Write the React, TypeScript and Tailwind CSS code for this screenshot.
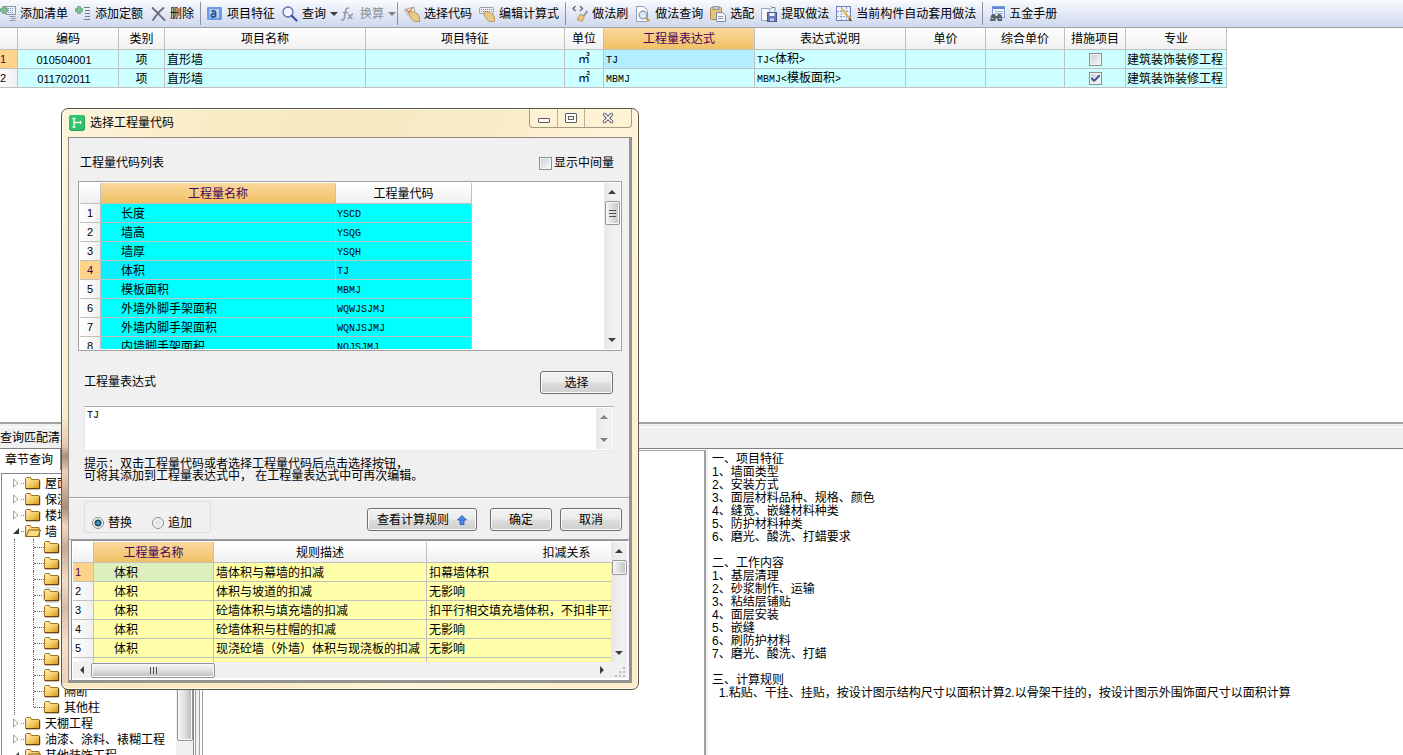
import { Check, X } from "lucide-react";
import clsx from "clsx";
import type { ReactNode } from "react";

/* ---------- Icons ---------- */

type IconName =
  | "addList"
  | "addQuota"
  | "remove"
  | "feature"
  | "search"
  | "fx"
  | "pick"
  | "edit"
  | "brush"
  | "lookup"
  | "paste"
  | "extract"
  | "auto"
  | "manual";

const plus = (
  <path d="M2.500.5h3v2h2v3h-2v2h-3v-2h-2v-3h2z" fill="#7dbd8f" stroke="#5a9d72" strokeWidth=".7" />
);
const hand = (
  <path
    d="M5 6.500 7 5l2 1.500L10.500 6l1.500 1.500 1.500 0L15.500 11v4.500h-5L8 13.500 5.500 10z"
    fill="#e9c98a"
    stroke="#b08b4c"
    strokeWidth=".8"
  />
);

const icons: Record<IconName, ReactNode> = {
  addList: (
    <>
      <rect x="6.500" y=".5" width="9" height="8" fill="#f1f4fb" stroke="#8b96b2" />
      <path d="M8 2.500h1m1 0h1m1 0h1M8 4.500h1m1 0h1m1 0h1M8 6.500h1m1 0h1m1 0h1" stroke="#7d89a8" />
      <path d="M9.500 10.500h6M11 12.500h4.500M9.500 14.500h6" stroke="#8d95a6" fill="none" />
      {plus}
    </>
  ),
  addQuota: (
    <>
      <path d="M9 1.500h6M10 4.500h5M10 7.500h5M10 10.500h5M9 13.500h6" stroke="#71798c" />
      {plus}
    </>
  ),
  remove: (
    <path
      d="M2.500 2C6 5 10 9.500 14.500 14M13.500 2C9 5.500 6 9.500 3 14"
      fill="none"
      stroke="#666c7a"
      strokeWidth="1.800"
      strokeLinecap="round"
    />
  ),
  feature: (
    <>
      <rect x="0" y="1" width="15" height="13" rx="1" fill="#6d9be6" />
      <rect x="2.500" y="3" width="9.500" height="9" fill="#b9d1f5" />
      <path
        d="M4.500 5.500c2-1.300 4-.8 4 1V11M8.500 7.500c-5-.3-5.500 3.500-2.500 3.500 1.500 0 2.500-1 2.500-2"
        fill="none"
        stroke="#32548f"
        strokeWidth="1.800"
      />
    </>
  ),
  search: (
    <>
      <circle cx="6" cy="6" r="5" fill="#f4f7ff" stroke="#5f6fb5" strokeWidth="1.300" />
      <path d="m9.800 9.800 4.700 4.700" stroke="#3d4fae" strokeWidth="2.200" strokeLinecap="round" />
    </>
  ),
  fx: (
    <path
      d="M9 2.500C7 1 5.800 3 5.400 5.500L4.300 12c-.4 2-1.800 2.700-3.300 1.500M3 6.500h5M8 8.500c2-.8 1.800 4.500 4.500 4M13 8c-2 .5-3 4.500-5.500 4.500"
      fill="none"
      stroke="#8f96a6"
      strokeWidth="1.500"
    />
  ),
  pick: (
    <>
      <path d="M.5 3.500 10 1l1 5-7.500 3z" fill="#eee8dd" stroke="#a39b8c" strokeWidth=".8" />
      <path d="m2.500 3.500 2.500 3 3.500-5" fill="none" stroke="#d5704e" strokeWidth="1.200" />
      {hand}
    </>
  ),
  edit: (
    <>
      <rect x=".5" y="1.500" width="14" height="6" rx="1" fill="#eceef2" stroke="#9aa0ac" />
      <path d="M2 3.500h11M2 5.500h11" stroke="#8b92a1" strokeDasharray="1 1" />
      {hand}
    </>
  ),
  brush: (
    <>
      <path d="M3.500 0 1 2.500 3.500 5M8 0l2.500 2.500L8 5" fill="none" stroke="#53596a" strokeWidth="1.200" />
      <path d="m15.500 5-4 5" stroke="#9099ab" strokeWidth="2" />
      <path d="m8.500 8 4 3-2.500 4.500-5-2z" fill="#e4c67c" stroke="#af8f49" strokeWidth=".8" />
    </>
  ),
  lookup: (
    <>
      <path d="M1.500.5h7l4 4v11h-11z" fill="#fbfcff" stroke="#96a0b8" />
      <circle cx="8" cy="9" r="3.800" fill="#dbe8f8" stroke="#8592ac" strokeWidth="1.200" />
      <path d="m10.800 12 3.500 3" stroke="#c7974a" strokeWidth="2.200" />
    </>
  ),
  paste: (
    <>
      <rect x=".5" y="1.500" width="11" height="12" rx="1" fill="#e6c47c" stroke="#ad894a" />
      <rect x="3" y=".5" width="6" height="3" fill="#c9cdd6" stroke="#868d9c" strokeWidth=".8" />
      <path d="M6.500 6.500h6l3 3v6h-9z" fill="#f5f7fc" stroke="#7f8ba8" />
      <path d="M8 10.500h5M8 12.500h5" stroke="#8f9ab5" />
    </>
  ),
  extract: (
    <>
      <path d="M.5 2.500h8v12h-8z" fill="#f6f8fd" stroke="#9ba6c0" />
      <path d="M11 1.500h3v4M9.500 3l1.500-1.500L9.500 0" fill="none" stroke="#7c88a5" />
      <rect x="6.500" y="6.500" width="9" height="9" fill="#6976b8" stroke="#4a568f" />
      <path d="M8.500 7h5v3h-5z" fill="#eef1fb" />
      <path d="M9 12.500h4V15H9z" fill="#c4cbe6" />
    </>
  ),
  auto: (
    <>
      <rect x=".5" y=".5" width="14" height="14" fill="#eef2fb" stroke="#6e83bd" />
      <path d="M1 5.500h13M1 10.500h13M5.500 1v13M10.500 1v13" stroke="#8fa0cf" strokeDasharray="2 1" />
      <path d="m6 3 8 10" stroke="#e2b85b" strokeWidth="2.400" />
      <path d="m13 12.500 2.500 2.500" stroke="#5c4a2a" strokeWidth="1.500" />
    </>
  ),
  manual: (
    <>
      <rect x="3.500" y=".5" width="12" height="11" fill="#f1f6fe" stroke="#7a9cd3" />
      <path d="M4 2h11" stroke="#5c8ad6" strokeWidth="2" />
      <path d="M6 5.500h8M6 7.500h8" stroke="#a3b4d1" />
      <path d="M2 9.500 4 8h2l1 2h1l1-2h2l2 1.500V15H8.500v-2.500h-2V15H1z" fill="#59626f" />
      <path d="M2.500 12.500h2M10 12.500h2" stroke="#b9c1cc" />
    </>
  ),
};

function Triangle({ dir, dim }: { dir: "up" | "down" | "left" | "right"; dim?: boolean }) {
  const d = {
    up: "M4 2 8 6H0z",
    down: "M0 2h8L4 6z",
    left: "M6 0v8L2 4z",
    right: "M2 0v8l4-4z",
  }[dir];
  return (
    <svg viewBox="0 0 8 8" className="size-2 shrink-0">
      <path d={d} fill={dim ? "#808080" : "#3c3c3c"} />
    </svg>
  );
}

function Folder({ open }: { open?: boolean }) {
  return (
    <svg viewBox="0 0 16 14" className="h-[14px] w-4 shrink-0">
      <defs>
        <linearGradient id="folder" x1="0" y1="0" x2="1" y2="1">
          <stop offset="0" stopColor="#fff0b8" />
          <stop offset=".5" stopColor="#f5cf6a" />
          <stop offset="1" stopColor="#d48f14" />
        </linearGradient>
      </defs>
      <path d="M.5 12.500V2.500l1-1h4l1 2h7.500l.5 1v8z" fill="url(#folder)" stroke="#a3741c" />
      {open && <path d="M.8 12.500 4 6h11.500l-2.500 6.500z" fill="#f9dc83" stroke="#8a6118" />}
      {!open && <path d="M1 12.800h13.700V4.500" fill="none" stroke="#4d3508" />}
    </svg>
  );
}

/* ---------- Toolbar ---------- */

interface Tool {
  icon: IconName;
  label: string;
  menu?: boolean;
  disabled?: boolean;
}

const toolGroups: Tool[][] = [
  [
    { icon: "addList", label: "添加清单" },
    { icon: "addQuota", label: "添加定额" },
    { icon: "remove", label: "删除" },
  ],
  [
    { icon: "feature", label: "项目特征" },
    { icon: "search", label: "查询", menu: true },
    { icon: "fx", label: "换算", menu: true, disabled: true },
  ],
  [
    { icon: "pick", label: "选择代码" },
    { icon: "edit", label: "编辑计算式" },
  ],
  [
    { icon: "brush", label: "做法刷" },
    { icon: "lookup", label: "做法查询" },
    { icon: "paste", label: "选配" },
    { icon: "extract", label: "提取做法" },
    { icon: "auto", label: "当前构件自动套用做法" },
  ],
  [{ icon: "manual", label: "五金手册" }],
];

function Toolbar() {
  return (
    <div className="flex h-7 shrink-0 items-center gap-[6px] overflow-hidden border-b border-[#a0a0a0] bg-gradient-to-b from-[#fafbfe] via-[#e3e8f5] to-[#cfd8ee]">
      {toolGroups.map((group, i) => (
        <div key={i} className="flex shrink-0 items-center gap-[6px]">
          {i > 0 && <span className="h-[23px] w-px bg-[#8e929c]" />}
          <div className="flex items-center gap-[7px]">
            {group.map((tool) => (
              <button
                key={tool.label}
                disabled={tool.disabled}
                className={clsx(
                  "flex shrink-0 items-center gap-1 whitespace-nowrap",
                  tool.disabled && "text-[#8c8f98]",
                  tool.menu && "-mr-[5px]"
                )}
              >
                <svg viewBox="0 0 16 16" className="size-4 shrink-0">
                  {icons[tool.icon]}
                </svg>
                {tool.label}
                {tool.menu && <Triangle dir="down" dim={tool.disabled} />}
              </button>
            ))}
          </div>
        </div>
      ))}
    </div>
  );
}

/* ---------- Shared controls ---------- */

function CheckBox({ id, label, checked }: { id: string; label?: string; checked?: boolean }) {
  return (
    <span className="relative inline-block size-[13px] shrink-0 align-top">
      <input
        id={id}
        type="checkbox"
        aria-label={label}
        defaultChecked={checked}
        className="peer block size-[13px] appearance-none border border-[#8e8f8f] bg-gradient-to-br from-[#c9ced6] to-[#fbfbfb] shadow-[inset_0_0_0_1px_#f4f4f4]"
      />
      <Check
        size={11}
        strokeWidth={4}
        className="pointer-events-none absolute top-px left-px hidden text-[#3c4f9c] peer-checked:block"
      />
    </span>
  );
}

function PushButton({ children, className }: { children: ReactNode; className: string }) {
  return (
    <button
      className={clsx(
        "flex h-[23px] items-center justify-center gap-2 rounded-[3px] border border-[#707070] bg-[linear-gradient(#f2f2f2,#ebebeb_48%,#dddddd_52%,#cfcfcf)] shadow-[inset_0_0_0_1px_#fafafa]",
        className
      )}
    >
      {children}
    </button>
  );
}

function Radio({ label, checked }: { label: string; checked?: boolean }) {
  return (
    <label className="flex items-center gap-1">
      <input
        type="radio"
        name="mode"
        defaultChecked={checked}
        className="size-3 appearance-none rounded-full border border-[#8e8f8f] bg-[radial-gradient(circle,#dcdfe3,#fbfbfb)] shadow-[inset_0_0_0_1px_#f4f4f4] checked:bg-[radial-gradient(circle,#5cc0ec_0,#12405f_3px,#f4f4f4_4px)]"
      />
      {label}
    </label>
  );
}

function VScroll({ thumb, dim }: { thumb?: ReactNode; dim?: boolean }) {
  return (
    <div
      aria-hidden="true"
      className="flex w-4 shrink-0 flex-col items-center bg-gradient-to-r from-[#e6e6e6] via-[#f0f0f0] to-[#f0f0f0]"
    >
      <span className="flex h-[18px] items-center">
        <Triangle dir="up" dim={dim} />
      </span>
      {thumb}
      <span className="mt-auto flex h-[18px] items-center">
        <Triangle dir="down" dim={dim} />
      </span>
    </div>
  );
}

const thumbBase =
  "flex items-center justify-center rounded-[2px] border border-[#959595] shadow-[inset_0_0_0_1px_#fafafa]";

const box = "overflow-hidden border-r border-b border-[#c0c0c0] whitespace-nowrap";
const cell = clsx(box, "pt-[2px] leading-4");
const codeCell = clsx(box, "leading-[18px]");
const headCell = clsx(box, "bg-gradient-to-b from-white to-[#f0f0f0] pt-[2px] text-center font-normal");
const activeHead = clsx(
  box,
  "bg-gradient-to-b from-[#fad99d] to-[#f0c063] pt-[2px] text-center font-normal text-[#4b0059]"
);
const rowHead = clsx(codeCell, "bg-gradient-to-r from-white to-[#f0f0f0] text-[11px] font-normal");
const activeRowHead = clsx(codeCell, "bg-[#ffd38a] text-[11px] font-normal text-[#4b0059]");
const mono = "font-['Liberation_Mono','Noto_Sans_CJK_SC',monospace] text-[10px] leading-none";

/* ---------- Bill table ---------- */

const billColumns = [
  { title: "", width: "w-[18px]" },
  { title: "编码", width: "w-[101px]" },
  { title: "类别", width: "w-[46px]" },
  { title: "项目名称", width: "w-[201px]" },
  { title: "项目特征", width: "w-[199px]" },
  { title: "单位", width: "w-[39px]" },
  { title: "工程量表达式", width: "w-[151px]" },
  { title: "表达式说明", width: "w-[151px]" },
  { title: "单价", width: "w-[80px]" },
  { title: "综合单价", width: "w-[79px]" },
  { title: "措施项目", width: "w-[61px]" },
  { title: "专业", width: "w-[101px]" },
];

const billRows = [
  { code: "010504001", unit: "㎥", expr: "TJ", note: "体积", measure: false },
  { code: "011702011", unit: "㎡", expr: "MBMJ", note: "模板面积", measure: true },
];

function BillTable() {
  return (
    <div className="min-h-0 flex-1 overflow-hidden">
      <table className="w-[1227px] table-fixed border-separate border-spacing-0">
        <thead>
          <tr className="leading-[19px]">
            {billColumns.map((col, i) => (
              <th
                key={i}
                aria-label={col.title || "序号"}
                className={clsx(i === 6 ? activeHead : headCell, col.width)}
              >
                {col.title}
              </th>
            ))}
          </tr>
        </thead>
        <tbody className="bg-[#ccffff]">
          {billRows.map((row, i) => (
            <tr key={row.code}>
              <th className={clsx(i === 0 ? activeRowHead : rowHead, "text-left")}>{i + 1}</th>
              <td className={clsx(cell, "pr-2 text-center text-[11px]")}>{row.code}</td>
              <td className={clsx(cell, "text-center")}>项</td>
              <td className={clsx(cell, "pl-[2px]")}>直形墙</td>
              <td className={cell} />
              <td className={clsx(codeCell, "text-center")}>{row.unit}</td>
              <td className={clsx(codeCell, "pl-[2px]", i === 0 && "bg-[#b3eeff]")}>
                <span className={mono}>{row.expr}</span>
              </td>
              <td className={clsx(codeCell, "pl-[2px]")}>
                <span className={mono}>{row.expr}&lt;</span>
                {row.note}
                <span className={mono}>&gt;</span>
              </td>
              <td className={cell} />
              <td className={cell} />
              <td className={clsx(box, "text-center leading-none")}>
                <CheckBox id={`measure-${i}`} label="措施项目" checked={row.measure} />
              </td>
              <td className={clsx(cell, "pl-px")}>建筑装饰装修工程</td>
            </tr>
          ))}
        </tbody>
      </table>
    </div>
  );
}

/* ---------- Bottom panel ---------- */

const treeTop = [{ label: "屋面" }, { label: "保温" }, { label: "楼地" }, { label: "墙", open: true }];
const treeChildren = ["", "", "", "", "", "", "", "", "", "隔断", "其他柱"];
const treeRest = [{ label: "天棚工程" }, { label: "油漆、涂料、裱糊工程" }, { label: "其他装饰工程", open: true }];

function TreeNode({ label, open }: { label: string; open?: boolean }) {
  return (
    <li className="flex h-4 items-center whitespace-nowrap">
      <svg viewBox="0 0 8 10" className="ml-[10px] h-[10px] w-2 shrink-0">
        {open ? (
          <path d="M7 2v6H1z" fill="#333333" />
        ) : (
          <path d="M1.500 1v8L6 5z" fill="#ffffff" stroke="#a0a0a0" />
        )}
      </svg>
      <span className="mx-px w-[3px] border-t border-dotted border-[#808080]" />
      <Folder open={open} />
      <span className="ml-1 pt-[2px]">{label}</span>
    </li>
  );
}

function ChapterTree() {
  return (
    <div className="flex w-[203px] shrink-0 flex-col border-r border-[#a0a0a0]">
      <button className="h-[21px] w-[61px] shrink-0 border-r border-[#828790] pr-[2px] text-center">
        章节查询
      </button>
      <div className="mt-[3px] ml-px flex min-h-0 flex-1 border-t border-l border-[#828790]">
        <ul className="min-w-0 flex-1 overflow-hidden pt-px">
          {treeTop.map((node) => (
            <TreeNode key={node.label} {...node} />
          ))}
          <li>
            <ul className="ml-3 border-l border-dotted border-[#606060] pl-[18px]">
              {treeChildren.map((label, i) => (
                <li key={i} className="flex h-4 items-center whitespace-nowrap">
                  <span
                    className={clsx(
                      "w-px shrink-0 self-start border-l border-dotted border-[#606060]",
                      i === treeChildren.length - 1 ? "h-2" : "h-4"
                    )}
                  />
                  <span className="w-[10px] shrink-0 border-t border-dotted border-[#606060]" />
                  <span className={clsx("flex", i === 3 && "rounded-sm bg-[#f0f0f0] outline outline-[#d9d9d9]")}>
                    <Folder />
                  </span>
                  <span className="ml-1 pt-[2px]">{label}</span>
                </li>
              ))}
            </ul>
          </li>
          {treeRest.map((node) => (
            <TreeNode key={node.label} {...node} />
          ))}
        </ul>
        <div aria-hidden="true" className="flex w-[17px] shrink-0 justify-center bg-[#f0f0f0]">
          <div
            className={clsx(thumbBase, "mb-[14px] w-4 bg-gradient-to-r from-[#f5f5f5] via-[#dedede] to-[#b9b9b9]")}
          />
        </div>
        <div aria-hidden="true" className="flex w-[9px] shrink-0 border-l border-[#828790] pl-px">
          <span className="w-[5px] border-x border-[#a0a0a0] bg-[#f0f0f0]" />
        </div>
      </div>
    </div>
  );
}

const noteText = `一、项目特征
1、墙面类型
2、安装方式
3、面层材料品种、规格、颜色
4、缝宽、嵌缝材料种类
5、防护材料种类
6、磨光、酸洗、打蜡要求

二、工作内容
1、基层清理
2、砂浆制作、运输
3、粘结层铺贴
4、面层安装
5、嵌缝
6、刷防护材料
7、磨光、酸洗、打蜡

三、计算规则
  1.粘贴、干挂、挂贴，按设计图示结构尺寸以面积计算2.以骨架干挂的，按设计图示外围饰面尺寸以面积计算`;

function QueryPanel() {
  return (
    <div className="flex h-[333px] shrink-0 flex-col border-t-2 border-[#a0a0a0]">
      <div className="h-[25px] shrink-0 border-b border-[#808080] bg-[#f0f0f0] pt-[3px]">
        <div className="border-t border-white pt-px leading-[19px]">
          <button className="block">查询匹配清单</button>
        </div>
      </div>
      <div className="flex min-h-0 flex-1">
        <ChapterTree />
        <div className="mt-px w-[503px] shrink-0 border-t border-r-2 border-[#a0a0a0]" />
        <div className="min-w-0 flex-1 overflow-hidden border-l-2 border-[#f0f0f0] pt-1 pl-1 leading-[13px] whitespace-pre">
          {noteText}
        </div>
      </div>
    </div>
  );
}

/* ---------- Code dialog ---------- */

const codes = [
  ["长度", "YSCD"],
  ["墙高", "YSQG"],
  ["墙厚", "YSQH"],
  ["体积", "TJ"],
  ["模板面积", "MBMJ"],
  ["外墙外脚手架面积", "WQWJSJMJ"],
  ["外墙内脚手架面积", "WQNJSJMJ"],
  ["内墙脚手架面积", "NQJSJMJ"],
];

const rules = [
  ["墙体积与幕墙的扣减", "扣幕墙体积"],
  ["体积与坡道的扣减", "无影响"],
  ["砼墙体积与填充墙的扣减", "扣平行相交填充墙体积，不扣非平行"],
  ["砼墙体积与柱帽的扣减", "无影响"],
  ["现浇砼墙（外墙）体积与现浇板的扣减", "无影响"],
];

function CodeTable() {
  return (
    <div className="mr-[7px] ml-[9px] flex h-[170px] border border-[#a0a0a0] bg-white p-px">
      <div className="min-w-0 flex-1 overflow-hidden">
        <table className="w-[392px] table-fixed border-separate border-spacing-0">
          <thead>
            <tr className="leading-[18px]">
              <th aria-label="序号" className={clsx(headCell, "w-[21px]")} />
              <th className={clsx(activeHead, "w-[235px]")}>工程量名称</th>
              <th className={clsx(headCell, "w-[136px]")}>工程量代码</th>
            </tr>
          </thead>
          <tbody className="bg-[#00ffff]">
            {codes.map(([name, code], i) => (
              <tr key={code} className={clsx(i === 3 && "bg-[#08f0ff]")}>
                <th className={clsx(i === 3 ? activeRowHead : rowHead, "text-center")}>{i + 1}</th>
                <td className={clsx(cell, "pl-5")}>{name}</td>
                <td className={clsx(codeCell, "pl-px")}>
                  <span className={mono}>{code}</span>
                </td>
              </tr>
            ))}
          </tbody>
        </table>
      </div>
      <VScroll
        thumb={
          <span className={clsx(thumbBase, "h-6 w-[15px] bg-gradient-to-r from-[#f5f5f5] to-[#c4c4c4]")}>
            <span className="h-[7px] w-[7px] bg-[repeating-linear-gradient(#505050_0_1px,transparent_1px_3px)]" />
          </span>
        }
      />
    </div>
  );
}

function RuleTable() {
  return (
    <div className="mr-px ml-[2px] h-[140px] border-t border-l border-[#8e8e96] bg-white p-px">
      <div className="flex h-[120px]">
        <div className="min-w-0 flex-1 overflow-hidden">
          <table className="w-[634px] table-fixed border-separate border-spacing-0">
            <thead>
              <tr className="leading-[18px]">
                <th aria-label="序号" className={clsx(headCell, "w-[21px]")} />
                <th className={clsx(activeHead, "w-[120px]")}>工程量名称</th>
                <th className={clsx(headCell, "w-[213px]")}>规则描述</th>
                <th className={clsx(headCell, "w-[280px]")}>扣减关系</th>
              </tr>
            </thead>
            <tbody className="bg-[#ffffaa]">
              {rules.map(([rule, relation], i) => (
                <tr key={rule}>
                  <th className={clsx(i === 0 ? activeRowHead : rowHead, "pl-[2px] text-left")}>{i + 1}</th>
                  <td className={clsx(cell, "pl-5", i === 0 && "bg-[#dcefbc]")}>体积</td>
                  <td className={clsx(cell, "pl-[2px]")}>{rule}</td>
                  <td className={clsx(cell, "pl-[2px]")}>{relation}</td>
                </tr>
              ))}
              <tr className="h-[19px]">
                <th className={rowHead} />
                <td className={cell} />
                <td className={cell} />
                <td className={cell} />
              </tr>
            </tbody>
          </table>
        </div>
        <VScroll
          thumb={
            <span className={clsx(thumbBase, "h-[15px] w-[15px] bg-gradient-to-r from-[#f5f5f5] to-[#c4c4c4]")} />
          }
        />
      </div>
      <div aria-hidden="true" className="flex h-4 items-center bg-[#f0f0f0]">
        <span className="flex w-[18px] justify-center">
          <Triangle dir="left" />
        </span>
        <span className={clsx(thumbBase, "h-[15px] w-[124px] bg-gradient-to-b from-[#f5f5f5] via-[#e0e0e0] to-[#bdbdbd]")}>
          <span className="h-[7px] w-[7px] bg-[repeating-linear-gradient(90deg,#505050_0_1px,transparent_1px_3px)]" />
        </span>
        <span className="ml-auto flex w-[18px] justify-center">
          <Triangle dir="right" />
        </span>
        <svg viewBox="0 0 16 16" className="size-4">
          <path
            d="M12 5h2v2h-2zM12 9h2v2h-2zM12 13h2v2h-2zM8 9h2v2H8zM8 13h2v2H8zM4 13h2v2H4z"
            fill="#bdbdbd"
          />
        </svg>
      </div>
    </div>
  );
}

function TitleBar() {
  return (
    <div className="flex h-7 items-start pl-[7px]">
      <svg viewBox="0 0 16 16" className="mt-[6px] size-4 shrink-0">
        <rect width="16" height="16" rx="3" fill="#1f9d50" />
        <rect width="15" height="15" rx="3" fill="#2fc46c" />
        <path d="M5 3v9M5 7.500h6M3.500 3.500h3M3.500 12h3M11.500 6v3" fill="none" stroke="#ffffff" strokeWidth="1.300" />
      </svg>
      <h2 id="dialog-title" className="mt-[6px] ml-[5px] leading-4">
        选择工程量代码
      </h2>
      <div className="mr-[6px] ml-auto flex h-[19px] rounded-b-[4px] border border-t-0 border-[#a39b84] bg-[#fdf2d3]">
        <button aria-label="最小化" className="flex w-[27px] items-end justify-center pb-[4px]">
          <span className="h-[5px] w-3 rounded-[1px] border border-[#5b5f6b] bg-white" />
        </button>
        <button
          aria-label="最大化"
          className="flex w-7 items-center justify-center border-x border-[#b9b098]"
        >
          <span className="flex h-[10px] w-3 items-center justify-center rounded-[1px] border border-[#5b5f6b] bg-white">
            <span className="h-1 w-[6px] border border-[#5b5f6b] bg-[#fdf2d3]" />
          </span>
        </button>
        <button aria-label="关闭" className="relative flex w-[46px] items-center justify-center">
          <X size={14} strokeWidth={6} className="text-[#5b5f6b]" />
          <X size={14} strokeWidth={3} className="absolute text-white" />
        </button>
      </div>
    </div>
  );
}

function CodeDialog() {
  return (
    <div
      role="dialog"
      aria-labelledby="dialog-title"
      className="absolute top-[108px] left-[61px] w-[578px] rounded-[7px] border border-[#5c5748] bg-[linear-gradient(110deg,#fdf4dc_0,#faecc6_18%,#f7e8c0_35%,#f9ebc8_55%,#fff4d8_70%,#fceccb)] pb-[6px] shadow-[inset_0_0_0_1px_#fffaea]"
    >
      <span
        aria-hidden="true"
        className="absolute bottom-[6px] left-0 h-[270px] w-[6px] bg-[linear-gradient(transparent,#e9c8ae_12%,#a98d7a_16%,#f0d2b8_22%,#c8a58c_30%,#a98d7a_35%,#f3d8bf_42%,#c9a990_50%,#f5dcc4_62%,#d9bba2_72%,#f7e0c8_85%,#ecd0b6)]"
      />
      <TitleBar />
      <div className="mr-[6px] ml-[6px] border border-r-[3px] border-b-[3px] border-[#8f8c84] border-r-[#93938f] border-b-[#93938f] bg-[#f0f0f0]">
        <div className="flex h-[43px] items-start justify-between pt-[17px] pr-[15px] pl-[11px] leading-4">
          <span>工程量代码列表</span>
          <label htmlFor="show-middle" className="flex items-center gap-[2px]">
            <CheckBox id="show-middle" />
            显示中间量
          </label>
        </div>
        <CodeTable />
        <div className="flex h-[55px] items-start justify-between pt-5 pr-4 pl-[15px]">
          <label htmlFor="expression" className="leading-[22px]">
            工程量表达式
          </label>
          <PushButton className="w-[73px]">选择</PushButton>
        </div>
        <div className="mx-[15px] flex h-[45px] border border-[#e3e9ef] border-t-[#abadb3] bg-white p-px">
          <textarea
            id="expression"
            defaultValue="TJ"
            className="min-w-0 flex-1 resize-none overflow-hidden px-px pt-[2px] font-['Liberation_Mono',monospace] text-[10px] leading-3 outline-none"
          />
          <VScroll dim />
        </div>
        <p className="mb-[15px] pt-[7px] pl-[15px] leading-3">
          提示：双击工程量代码或者选择工程量代码后点击选择按钮，
          <br />
          可将其添加到工程量表达式中， 在工程量表达式中可再次编辑。
        </p>
        <div className="flex h-[43px] items-start border-y border-t-[#a0a0a0] border-b-[#a0a0a0] pt-px pr-[7px] shadow-[inset_0_1px_0_#ffffff]">
          <fieldset className="mt-[2px] ml-[15px] flex h-8 w-[127px] items-center gap-5 rounded-[3px] border border-[#d5dfe5] pt-[11px] pl-[7px]">
            <Radio label="替换" checked />
            <Radio label="追加" />
          </fieldset>
          <div className="mt-[9px] ml-auto flex items-center gap-2">
            <PushButton className="mr-[5px] w-[110px]">
              查看计算规则
              <svg viewBox="0 0 10 10" className="size-[10px]">
                <path d="M5 .5 9.500 5H7v4.500H3V5H.5z" fill="#4a86e8" stroke="#2754a8" strokeWidth=".8" />
              </svg>
            </PushButton>
            <PushButton className="w-[62px]">确定</PushButton>
            <PushButton className="w-[62px]">取消</PushButton>
          </div>
        </div>
        <RuleTable />
      </div>
    </div>
  );
}

export default function App() {
  return (
    <main className="relative flex h-screen flex-col overflow-hidden bg-white font-['Liberation_Sans','Noto_Sans_CJK_SC',sans-serif] text-[12px] text-black">
      <Toolbar />
      <BillTable />
      <QueryPanel />
      <CodeDialog />
    </main>
  );
}
